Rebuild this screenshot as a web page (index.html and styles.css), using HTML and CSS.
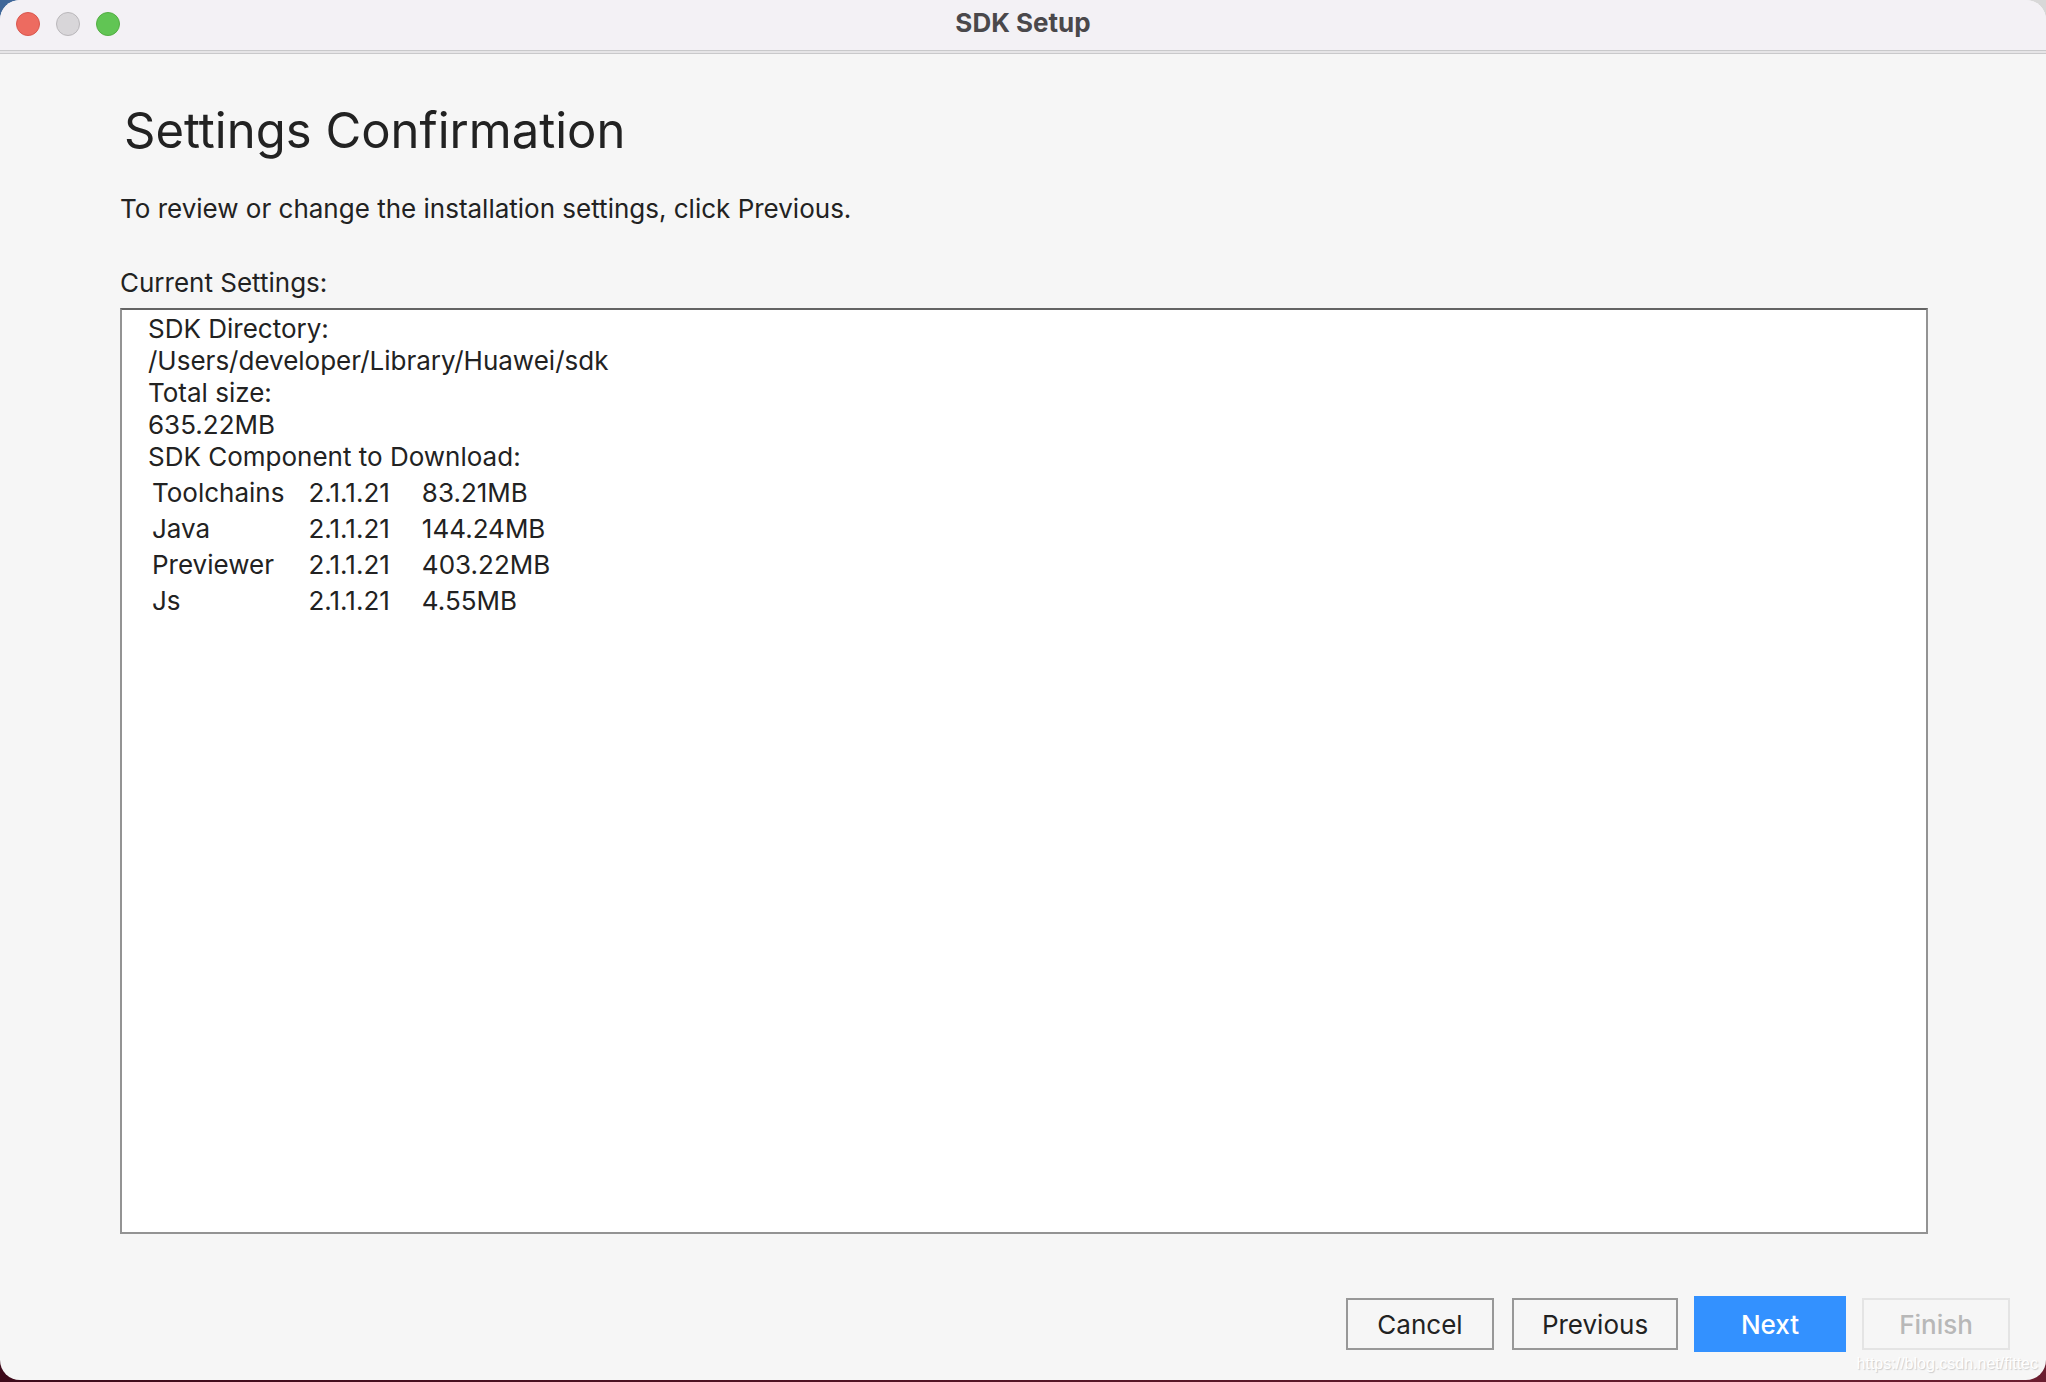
FILE: index.html
```html
<!DOCTYPE html>
<html lang="en">
<head>
<meta charset="utf-8">
<title>SDK Setup</title>
<link rel="stylesheet" href="styles.css">
</head>
<body>
<div class="window">
  <header class="titlebar">
    <div class="lights">
      <button class="light close" aria-label="Close"></button>
      <button class="light minimize" aria-label="Minimize" disabled></button>
      <button class="light maximize" aria-label="Maximize"></button>
    </div>
    <div class="title">SDK Setup</div>
  </header>
  <main class="content">
    <h1>Settings Confirmation</h1>
    <p class="hint">To review or change the installation settings, click Previous.</p>
    <h2 id="settings-label">Current Settings:</h2>
    <section class="settings" aria-labelledby="settings-label">
      <p>SDK Directory:</p>
      <p>/Users/developer/Library/Huawei/sdk</p>
      <p>Total size:</p>
      <p>635.22MB</p>
      <p>SDK Component to Download:</p>
      <table>
        <tbody>
          <tr><td>Toolchains</td><td class="version">2.1.1.21</td><td>83.21MB</td></tr>
          <tr><td>Java</td><td class="version">2.1.1.21</td><td>144.24MB</td></tr>
          <tr><td>Previewer</td><td class="version">2.1.1.21</td><td>403.22MB</td></tr>
          <tr><td>Js</td><td class="version">2.1.1.21</td><td>4.55MB</td></tr>
        </tbody>
      </table>
    </section>
  </main>
  <footer class="actions">
    <button class="btn">Cancel</button>
    <button class="btn previous">Previous</button>
    <button class="btn primary">Next</button>
    <button class="btn" disabled>Finish</button>
  </footer>
  <div class="watermark">https://blog.csdn.net/fittec</div>
</div>
</body>
</html>
```

FILE: styles.css
```css
* {
  box-sizing: border-box;
}

body {
  margin: 0;
  min-height: 100vh;
  display: flex;
  padding-bottom: 2px;
  background: linear-gradient(90deg, #3f6799 0 50%, #d8d8d8 50%) top / 100% 40px no-repeat,
    linear-gradient(90deg, #3d0a1a, #6b1e30);
  color: #222;
  font-family: Inter, "Liberation Sans", sans-serif;
  font-size: 26px;
  line-height: 32px;
}

h1,
h2,
p {
  margin: 0;
  font-weight: 400;
}

.window {
  position: relative;
  flex: 1;
  display: flex;
  flex-direction: column;
  overflow: hidden;
  border-radius: 20px;
  background: #f6f6f6;
}

.titlebar {
  display: grid;
  grid-template-columns: 1fr auto 1fr;
  align-items: center;
  height: 54px;
  padding: 0 16px 6px;
  border-bottom: 1px solid #c9c9cb;
  background: linear-gradient(#c9c9cb 0 1px, #e6e5e7 1px) bottom / 100% 3px no-repeat, #f3f1f5;
}

.lights {
  display: flex;
  gap: 16px;
}

.light {
  width: 24px;
  height: 24px;
  padding: 0;
  border: 1px solid;
  border-radius: 50%;
}

.close {
  border-color: #d8574e;
  background: #ed6b60;
}

.minimize {
  border-color: #b9b7ba;
  background: #d8d6d9;
}

.maximize {
  border-color: #53ad43;
  background: #61c554;
}

.title {
  padding-bottom: 2px;
  color: #4a484b;
  font-size: 26px;
  font-weight: 700;
}

.content {
  flex: 1;
  display: flex;
  flex-direction: column;
  padding: 45px 118px 0 120px;
}

h1 {
  padding-left: 4px;
  font-size: 49px;
  line-height: 64px;
}

.hint {
  margin-top: 30px;
}

h2 {
  margin-top: 42px;
  font-size: 26px;
}

.settings {
  flex: 1;
  margin-top: 9px;
  padding: 3px 26px;
  border: 2px solid #939393;
  border-top-color: #646464;
  background: #fff;
}

table {
  border-spacing: 4px;
}

td {
  height: 32px;
  padding: 0 20px 0 0;
}

.version {
  padding-right: 28px;
}

.actions {
  display: flex;
  justify-content: flex-end;
  align-items: center;
  gap: 16px;
  padding: 62px 36px 28px;
}

.btn {
  width: 148px;
  height: 52px;
  padding: 2px 0 0;
  border: 2px solid #989898;
  background: transparent;
  color: #222;
  font: inherit;
}

.previous {
  width: 166px;
  margin-left: 2px;
}

.primary {
  width: 152px;
  height: 56px;
  border: 0;
  background: #3391ff;
  color: #fff;
  font-weight: 500;
}

.btn:disabled {
  border-color: #e4e4e4;
  color: #b8b8b8;
  font-weight: 500;
}

.watermark {
  position: absolute;
  right: 8px;
  bottom: 6px;
  color: #fff;
  font-family: "Liberation Sans", sans-serif;
  font-size: 16px;
  line-height: 20px;
  text-shadow: 1px 1px 1px #ccc;
}
```
